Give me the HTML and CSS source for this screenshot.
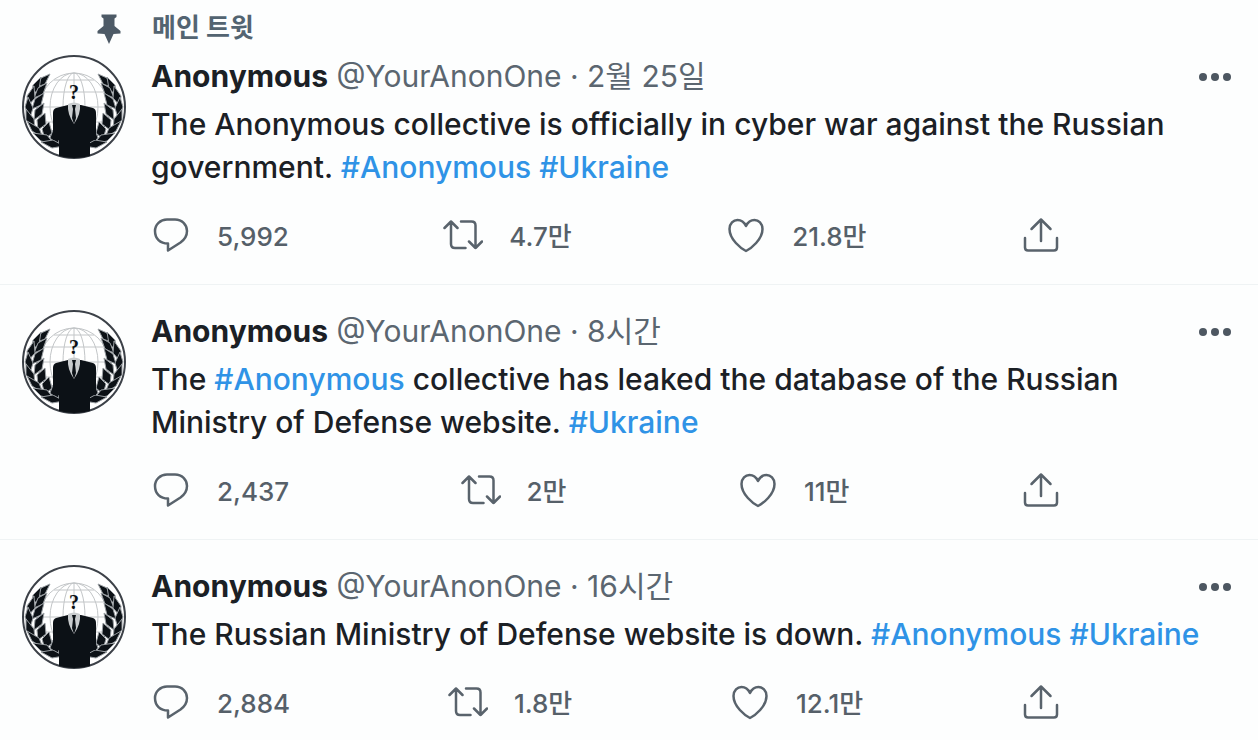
FILE: index.html
```html
<!DOCTYPE html>
<html lang="ko">
<head>
  <meta charset="UTF-8">
  <meta name="viewport" content="width=device-width, initial-scale=1.0">
  <title>Anonymous (@YourAnonOne)</title>
  <link rel="stylesheet" href="styles.css">
</head>
<body>

  <!-- shared icons -->
  <svg class="sprite" aria-hidden="true">
    <symbol id="reply" viewBox="0 0 40 40">
      <path stroke-width="2.5" d="M16 3.500h8c7 0 12 5 12 11.500 0 4.800-2.600 8.700-6.500 11.500l-12.500 8v-7c-8 0-13-5-13-12.500C4 8.500 9.300 3.500 16 3.500z"/>
    </symbol>
    <symbol id="retweet" viewBox="0 0 40 40">
      <path stroke-width="2.5" d="M1.500 12 8 5.500l6.500 6.500M8 5.500V28q0 4 4 4h10.500M18 5.500h10.500q4 0 4 4V32M26 25.500l6.500 6.500 6.500-6.500"/>
    </symbol>
    <symbol id="like" viewBox="0 0 40 40">
      <path stroke-width="2.5" d="M20 35C15 32.500 3.500 23.500 3.500 13 3.500 7.500 7.500 4 11.500 4c3.500 0 6.500 1.800 8.500 6C22 5.800 25 4 28.500 4c4 0 8 3.500 8 9C36.500 23.500 25 32.500 20 35z"/>
    </symbol>
    <symbol id="share" viewBox="0 0 40 40">
      <path stroke-width="2.5" d="M20 25V3.500M10.500 13 20 3.500l9.500 9.500M4 22v9.500q0 3 3 3h26q3 0 3-3V22"/>
    </symbol>
    <symbol id="laurel" viewBox="0 0 104 104">
      <path class="stem" d="M26 21C10 38 9 68 38 89"/>
      <path d="M28 19l-9 4-4 9 8-3z"/>
      <path d="M19 22l-8 8-1 10 7-6z"/>
      <path d="M25 28l-9 5-4 10 9-4z"/>
      <path d="M12 31l-7 10 1 10 7-8z"/>
      <path d="M22 38l-9 6-3 10 9-4z"/>
      <path d="M6 42l-3 10 5 11 3-10z"/>
      <path d="M22 48l-9 7-1 10 8-6z"/>
      <path d="M4 54l0 11 9 9-1-10z"/>
      <path d="M23 58l-8 7 1 10 8-6z"/>
      <path d="M5 66l5 10 11 7-4-10z"/>
      <path d="M27 67l-7 7 3 10 7-6z"/>
      <path d="M11 78l8 8 13 3-7-9z"/>
      <path d="M31 75l-3 8 8 7 2-9z"/>
      <path d="M19 87l11 6 12-2-11-6z"/>
    </symbol>
    <symbol id="avatar" viewBox="0 0 104 104">
      <circle class="ring" cx="52" cy="52" r="51"/>
      <g class="globe">
        <circle cx="52" cy="52" r="34"/>
        <ellipse cx="52" cy="52" rx="24" ry="34"/>
        <ellipse cx="52" cy="52" rx="11" ry="34"/>
        <path d="M52 18v68M18 52h68M22 37h60M32 25h40M22 67h60"/>
      </g>
      <use href="#laurel"/>
      <use href="#laurel" transform="translate(104 0) scale(-1 1)"/>
      <text x="52" y="44" text-anchor="middle">?</text>
      <path d="M46 50l-12 3q-3 1-3 5v27h6v16q15 4 31 0V85h6V58q0-4-3-5l-12-3z"/>
      <path class="shirt" d="M46 49q6-3 12 0 1 10-6 20-7-10-6-20z"/>
      <path d="M50 50h4l-1 4 1 9-2 6-2-6 1-9z"/>
    </symbol>
  </svg>

  <main class="timeline">
    <article class="tweet">
      <div class="context">
        <svg class="pin" viewBox="0 0 26 32" aria-hidden="true">
          <path d="M5.500 2.500h15v2.500l-2 1.500v7.500l6 5v2.500l-7 .5-4.500 10-4.500-10-7-.5V19l6-5V6.500l-2-1.500z"/>
        </svg>
        <span>메인 트윗</span>
      </div>
      <div class="row">
        <svg class="avatar" role="img" aria-label="Anonymous"><use href="#avatar"/></svg>
        <div class="content">
          <div class="header">
            <div><span class="name">Anonymous</span> <span class="meta">@YourAnonOne · 2월 25일</span></div>
            <button class="more" aria-label="더 보기"><i></i><i></i><i></i></button>
          </div>
          <p class="text">The Anonymous collective is officially in cyber war against the Russian government. <a href="#">#Anonymous</a> <a href="#">#Ukraine</a></p>
          <div class="actions">
            <button><svg><use href="#reply"/></svg>5,992</button>
            <button><svg><use href="#retweet"/></svg>4.7만</button>
            <button><svg><use href="#like"/></svg>21.8만</button>
            <button aria-label="공유"><svg><use href="#share"/></svg></button>
          </div>
        </div>
      </div>
    </article>

    <article class="tweet">
      <div class="row">
        <svg class="avatar" role="img" aria-label="Anonymous"><use href="#avatar"/></svg>
        <div class="content">
          <div class="header">
            <div><span class="name">Anonymous</span> <span class="meta">@YourAnonOne · 8시간</span></div>
            <button class="more" aria-label="더 보기"><i></i><i></i><i></i></button>
          </div>
          <p class="text">The <a href="#">#Anonymous</a> collective has leaked the database of the Russian Ministry of Defense website. <a href="#">#Ukraine</a></p>
          <div class="actions">
            <button><svg><use href="#reply"/></svg>2,437</button>
            <button><svg><use href="#retweet"/></svg>2만</button>
            <button><svg><use href="#like"/></svg>11만</button>
            <button aria-label="공유"><svg><use href="#share"/></svg></button>
          </div>
        </div>
      </div>
    </article>

    <article class="tweet">
      <div class="row">
        <svg class="avatar" role="img" aria-label="Anonymous"><use href="#avatar"/></svg>
        <div class="content">
          <div class="header">
            <div><span class="name">Anonymous</span> <span class="meta">@YourAnonOne · 16시간</span></div>
            <button class="more" aria-label="더 보기"><i></i><i></i><i></i></button>
          </div>
          <p class="text">The Russian Ministry of Defense website is down. <a href="#">#Anonymous</a> <a href="#">#Ukraine</a></p>
          <div class="actions">
            <button><svg><use href="#reply"/></svg>2,884</button>
            <button><svg><use href="#retweet"/></svg>1.8만</button>
            <button><svg><use href="#like"/></svg>12.1만</button>
            <button aria-label="공유"><svg><use href="#share"/></svg></button>
          </div>
        </div>
      </div>
    </article>
  </main>

</body>
</html>
```
FILE: styles.css
```css
body {
  margin: 0;
  background-color: #fdfefe;
  color: #1b2025;
  font-family: Inter, "Noto Sans CJK KR", sans-serif;
  font-size: 30px;
  line-height: 43px;
}
.sprite {
  display: none;
}
.tweet {
  padding: 25px 27px 28px 22px;
  border-bottom: 1px solid #eff3f4;
}
.tweet:first-child {
  padding-top: 6px;
}
.tweet:last-child {
  border-bottom: none;
  padding-bottom: 0;
}
.context {
  display: flex;
  align-items: center;
  gap: 30px;
  padding-left: 74px;
  margin-bottom: 6px;
  color: #536471;
  font-size: 26px;
  font-weight: bold;
}
.pin {
  width: 26px;
  height: 32px;
  fill: #4d5a66;
}
.row {
  display: flex;
  gap: 25px;
}
.avatar {
  flex: none;
  width: 104px;
  height: 104px;
  fill: #0c1116;
}
.ring {
  fill: #fff;
  stroke: #3c4148;
  stroke-width: 2px;
}
.globe {
  fill: none;
  stroke: #c3c6c8;
  stroke-width: 1px;
}
#laurel path {
  stroke: #9a9fa3;
  stroke-width: 1px;
}
#laurel .stem {
  fill: none;
  stroke: #4a5057;
}
.shirt {
  fill: #c9ccce;
}
#avatar text {
  font: bold 20px "Liberation Serif", serif;
}
.content {
  flex: 1;
  min-width: 0;
}
.header {
  display: flex;
  justify-content: space-between;
  margin-bottom: 5px;
}
.name {
  font-weight: 700;
}
.meta {
  color: #5b6670;
}
button {
  display: flex;
  align-items: center;
  padding: 0;
  border: none;
  background: none;
  color: #566069;
  font: inherit;
  cursor: pointer;
}
.more {
  gap: 4px;
}
.more i {
  width: 8px;
  height: 8px;
  border-radius: 50%;
  background-color: #4d5761;
}
.text {
  margin: 0 0 27px;
  padding-right: 16px;
  font-weight: 500;
}
.text a {
  color: #2f93e6;
  text-decoration: none;
}
.actions {
  display: flex;
  justify-content: space-between;
  max-width: 910px;
}
.actions button {
  gap: 26px;
  height: 40px;
  font-size: 26px;
  font-weight: 500;
}
.actions svg {
  width: 40px;
  height: 40px;
  fill: none;
  stroke: #59636c;
  stroke-linecap: round;
  stroke-linejoin: round;
}
```
